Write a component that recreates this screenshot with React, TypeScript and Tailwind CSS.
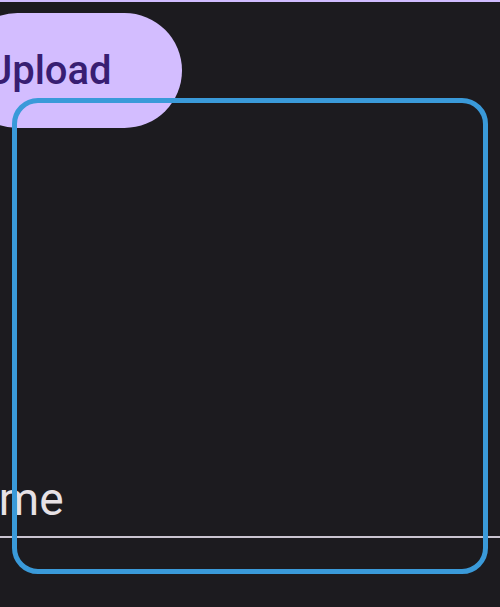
export default function App() {
  return (
    <div className="relative h-[607px] w-[500px] overflow-hidden bg-[#1c1b1f] font-['Roboto',sans-serif]">
      <div className="h-[2px] w-full bg-[#d0bcff]" />

      {/* upload button, cut off at the left edge */}
      <div className="mt-[11px] flex">
        <button className="-ml-[40px] flex h-[115px] w-[222px] items-center rounded-full bg-[#d3bdff] pl-[26px] text-[40px] font-medium text-[#381e72]">
          Upload
        </button>
      </div>

      {/* text field */}
      <div className="mt-[348px]">
        <p className="-ml-[59px] pb-[14px] text-[46px] leading-[46px] text-[#e6e1e5]">Name</p>
        <div className="h-[2px] w-full bg-[#cac4d0]" />
      </div>

      {/* selection outline drawn over content */}
      <div className="pointer-events-none absolute left-[12px] top-[98px] h-[476px] w-[476px] rounded-[26px] border-[5px] border-[#3a9ad9]" />
    </div>
  );
}
